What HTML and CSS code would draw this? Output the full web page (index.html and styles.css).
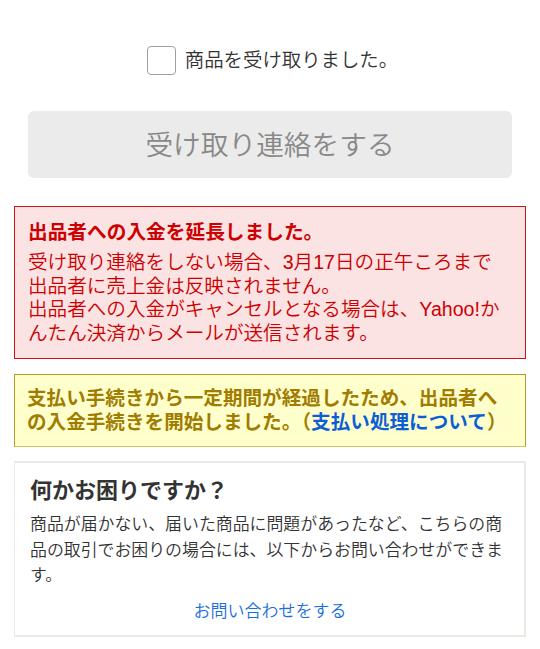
FILE: index.html
```html
<!DOCTYPE html>
<html lang="ja">
<head>
<meta charset="utf-8">
<link rel="stylesheet" href="styles.css">
</head>
<body>
<div class="page">
  <label class="agree">
    <span class="checkbox"></span>
    <span class="agree-text">商品を受け取りました。</span>
  </label>
  <div class="btn">受け取り連絡をする</div>
  <div class="notice notice-red">
    <p class="notice-title">出品者への入金を延長しました。</p>
    <p class="notice-body">受け取り連絡をしない場合、3月17日の正午ころまで<br>出品者に売上金は反映されません。<br>出品者への入金がキャンセルとなる場合は、Yahoo!か<br>んたん決済からメールが送信されます。</p>
  </div>
  <div class="notice notice-yellow">
    <p class="notice-yellow-text">支払い手続きから一定期間が経過したため、出品者へ<br>の入金手続きを開始しました。（<a class="link-strong" href="#">支払い処理について</a>）</p>
  </div>
  <div class="help">
    <h2 class="help-title">何かお困りですか？</h2>
    <p class="help-body">商品が届かない、届いた商品に問題があったなど、こちらの商品の取引でお困りの場合には、以下からお問い合わせができます。</p>
    <p class="help-link-row"><a class="help-link" href="#">お問い合わせをする</a></p>
  </div>
</div>
</body>
</html>
```

FILE: styles.css
```css
* { box-sizing: border-box; }
html, body { margin: 0; padding: 0; background: #fff; }
body {
  font-family: "Liberation Sans", "Noto Sans CJK JP", sans-serif;
  color: #333;
}
p, h2 { margin: 0; }
.page {
  width: 540px;
  padding: 46px 14px 0;
}
.agree {
  display: flex;
  justify-content: center;
  align-items: center;
  gap: 9px;
  height: 29px;
  padding-left: 5px;
}
.checkbox {
  width: 29px;
  height: 29px;
  border: 1.5px solid #a0a0a0;
  border-radius: 4px;
  background: #fff;
}
.agree-text {
  font-size: 19.4px;
  line-height: 29px;
  font-weight: 350;
  color: #333;
}
.btn {
  margin: 36px 14px 0;
  height: 67px;
  border-radius: 6px;
  background: #ebebeb;
  color: #888;
  font-size: 27.7px;
  font-weight: 350;
  line-height: 69px;
  text-align: center;
}
.notice {
  border: 1px solid;
}
.notice-red {
  margin-top: 28px;
  background: #fbe3e3;
  border-color: #cc1414;
  color: #cc0000;
  padding: 13px 13px 13px;
}
.notice-title {
  font-size: 19.7px;
  font-weight: bold;
  line-height: 24px;
}
.notice-body {
  margin-top: 7px;
  font-size: 19.6px;
  font-weight: 350;
  line-height: 23.5px;
}
.notice-yellow {
  margin-top: 15px;
  background: #ffffcc;
  border-color: #b39a2a;
  border-bottom-color: #d2bf6a;
  padding: 11px 12px 12px;
}
.notice-yellow-text {
  font-size: 19.6px;
  font-weight: bold;
  line-height: 24px;
  color: #a07c00;
}
.link-strong {
  color: #0b5ed7;
  text-decoration: none;
}
.help {
  margin-top: 14px;
  border: 2px solid #ebebe6;
  border-left-width: 1.5px;
  padding: 13px 14px 10px 15px;
}
.help-title {
  font-size: 22px;
  font-weight: bold;
  line-height: 30px;
  color: #333;
}
.help-body {
  margin-top: 6px;
  font-size: 16.9px;
  font-weight: 350;
  line-height: 25.5px;
  color: #333;
}
.help-link-row {
  margin-top: 10px;
  text-align: center;
  font-size: 17px;
  font-weight: 350;
  line-height: 26px;
}
.help-link {
  color: #1a6fdc;
  text-decoration: none;
}
```
